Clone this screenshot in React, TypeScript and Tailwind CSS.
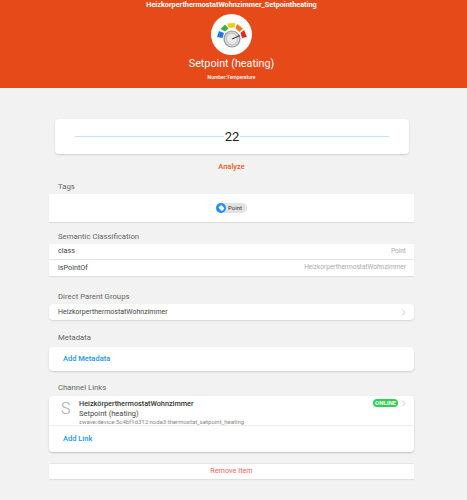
const font = { fontFamily: 'Roboto, "Noto Sans", sans-serif' };

function Gauge() {
  return (
    <svg width="32" height="26" viewBox="0 0 32 26">
      <path d="M1 15 L3 9 L8 11 L6.5 16 Z" fill="#1e78e0" />
      <path d="M4.5 7 L9 2.5 L12.5 6.5 L9 9.5 Z" fill="#3fae3a" />
      <path d="M11 1.5 L19 1 L18.5 5.5 L13 6 Z" fill="#f6c915" />
      <path d="M21 2 L27 6.5 L23.5 10 L19.5 6.5 Z" fill="#f07a1c" />
      <path d="M28 8 L31 15 L26 16 L24.5 11 Z" fill="#e0282e" />
      <circle cx="16" cy="17" r="8" fill="#d4d4d4" stroke="#9a9a9a" strokeWidth="1.2" />
      <circle cx="16" cy="17" r="5.5" fill="#ececec" stroke="#bdbdbd" strokeWidth="0.8" />
      <path d="M16 17 L24 13.5" stroke="#444" strokeWidth="1.2" />
    </svg>
  );
}

function SectionLabel({ children, className }: { children: string; className: string }) {
  return <div className={`pl-[58px] text-[7.75px] leading-[10px] text-[#666] ${className}`}>{children}</div>;
}

function Chevron() {
  return (
    <svg width="5" height="7" viewBox="0 0 5 7" fill="none" stroke="#bdbdbd" strokeWidth="0.8">
      <path d="M1 0.5 L4 3.5 L1 6.5" />
    </svg>
  );
}

export default function App() {
  return (
    <div className="h-[500px] overflow-hidden bg-[#f2f2f2]" style={font}>
      {/* Header */}
      <header className="h-[88px] w-[467px] pr-1 bg-[#e64a19] flex flex-col items-center text-white">
        <div className="text-[7.25px] leading-[10px] font-bold whitespace-nowrap">HeizkorperthermostatWohnzimmer_Setpointheating</div>
        <div className="mt-1 w-[41px] h-[41px] rounded-full bg-white flex items-center justify-center">
          <Gauge />
        </div>
        <div className="mt-[1px] text-[10.75px] leading-4 whitespace-nowrap">Setpoint (heating)</div>
        <div className="mt-[2px] text-[5px] leading-[6px] font-medium whitespace-nowrap">Number:Temperature</div>
      </header>

      <main className="w-[463px]">
        {/* Slider card */}
        <div className="ml-[55px] mr-[54px] mt-[31px] h-[35px] bg-white rounded-sm shadow-[0_1px_2px_rgba(0,0,0,0.15)] flex items-center justify-center relative">
          <div className="absolute left-5 right-5 top-[17px] h-px bg-[#bfe5fd]" />
          <span className="relative text-[13px] leading-4 text-[#222] bg-white px-px">22</span>
        </div>
        <div className="mt-[8px] text-center text-[7.5px] leading-[10px] font-medium text-[#ee5522]">Analyze</div>

        {/* Tags */}
        <SectionLabel className="mt-[10px]">Tags</SectionLabel>
        <div className="mx-[49px] mt-[2px] h-[28px] bg-white shadow-[0_1px_1px_rgba(0,0,0,0.08)] flex items-center justify-center">
          <div className="flex items-center h-[10px] rounded-full bg-[#e2e2e2] pr-[5px]">
            <span className="w-[10px] h-[10px] rounded-full bg-[#1e90ff] flex items-center justify-center">
              <span className="w-[5px] h-[4px] rounded-[1px] bg-white rotate-45" />
            </span>
            <span className="ml-[2px] text-[6px] leading-[10px] text-[#333]">Point</span>
          </div>
        </div>

        {/* Semantic classification */}
        <SectionLabel className="mt-[10px]">Semantic Classification</SectionLabel>
        <div className="mx-[49px] mt-[2px] bg-white shadow-[0_1px_1px_rgba(0,0,0,0.08)]">
          <div className="h-4 pl-[9px] pr-2 flex items-center justify-between border-b border-[#e4e4e4]">
            <span className="text-[7.25px] text-[#444]">class</span>
            <span className="text-[6.5px] text-[#aaa]">Point</span>
          </div>
          <div className="h-4 pl-[9px] pr-2 flex items-center justify-between">
            <span className="text-[7.25px] text-[#444]">isPointOf</span>
            <span className="text-[6.5px] text-[#aaa]">HeizkorperthermostatWohnzimmer</span>
          </div>
        </div>

        {/* Parent groups */}
        <SectionLabel className="mt-[16px]">Direct Parent Groups</SectionLabel>
        <div className="mx-[49px] mt-[2px] h-4 pl-[9px] pr-2 bg-white rounded-sm shadow-[0_1px_2px_rgba(0,0,0,0.12)] flex items-center justify-between">
          <span className="text-[7px] text-[#444]">HeizkorperthermostatWohnzimmer</span>
          <Chevron />
        </div>

        {/* Metadata */}
        <SectionLabel className="mt-[13px]">Metadata</SectionLabel>
        <div className="mx-[49px] mt-[4px] h-[24px] pl-[14px] bg-white rounded-sm shadow-[0_1px_2px_rgba(0,0,0,0.15)] flex items-center">
          <span className="text-[7.5px] font-medium text-[#2196f3]">Add Metadata</span>
        </div>

        {/* Channel links */}
        <SectionLabel className="mt-[12px]">Channel Links</SectionLabel>
        <div className="mx-[49px] mt-[3px] bg-white rounded-sm shadow-[0_1px_2px_rgba(0,0,0,0.2)]">
          <div className="h-[30px] pl-[12px] pr-2 flex border-b border-[#eee] relative">
            <span className="w-[18px] mt-[3px] text-[16px] leading-5 font-light text-[#aaa]">S</span>
            <div className="pt-[3px]">
              <div className="text-[7.25px] leading-[10px] font-medium text-[#333]">HeizkörperthermostatWohnzimmer</div>
              <div className="text-[7.5px] leading-[9px] text-[#444]">Setpoint (heating)</div>
              <div className="text-[6px] leading-[8px] text-[#888]">zwave:device:5c4bf1d312:node3:thermostat_setpoint_heating</div>
            </div>
            <div className="ml-auto mt-[3px] flex items-center gap-[3px] h-[8px]">
              <span className="h-[8px] px-[2px] rounded-full bg-[#2fd24f] text-white text-[6px] leading-[8px] font-bold">ONLINE</span>
              <Chevron />
            </div>
          </div>
          <div className="h-[26px] pl-[14px] flex items-center">
            <span className="text-[7.5px] font-medium text-[#2196f3]">Add Link</span>
          </div>
        </div>

        {/* Remove */}
        <div className="mx-[49px] mt-[11px] h-4 bg-white border-t border-[#e4e4e4] shadow-[0_1px_1px_rgba(0,0,0,0.08)] flex items-center justify-center text-[7.25px] text-[#ff5a5a]">
          Remove Item
        </div>
      </main>
    </div>
  );
}
